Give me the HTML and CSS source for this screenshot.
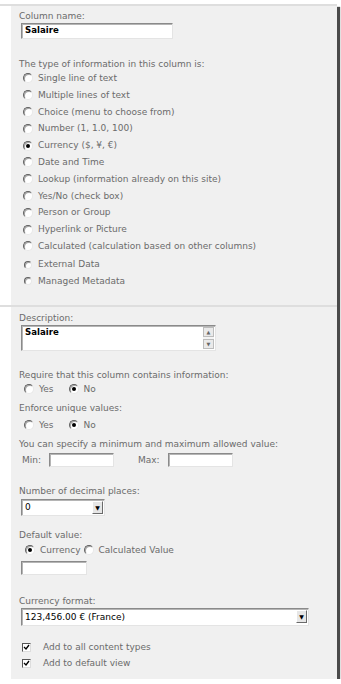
FILE: index.html
```html
<!DOCTYPE html>
<html lang="en">
<head>
    <meta charset="UTF-8">
    <title>Column settings</title>
    <link rel="stylesheet" href="styles.css">
</head>
<body>
<div class="sheet">
    <div class="row first">
        <div class="gutter"></div>
        <div class="panel">
            <div class="label">Column name:</div>
            <div class="box name"><b>Salaire</b></div>

            <div class="label type-head">The type of information in this column is:</div>
            <div class="choices">
                <div class="opt"><span class="radio"></span>Single line of text</div>
                <div class="opt"><span class="radio"></span>Multiple lines of text</div>
                <div class="opt"><span class="radio"></span>Choice (menu to choose from)</div>
                <div class="opt"><span class="radio"></span>Number (1, 1.0, 100)</div>
                <div class="opt"><span class="radio on"></span>Currency ($, ¥, €)</div>
                <div class="opt"><span class="radio"></span>Date and Time</div>
                <div class="opt"><span class="radio"></span>Lookup (information already on this site)</div>
                <div class="opt"><span class="radio"></span>Yes/No (check box)</div>
                <div class="opt"><span class="radio"></span>Person or Group</div>
                <div class="opt"><span class="radio"></span>Hyperlink or Picture</div>
                <div class="opt"><span class="radio"></span>Calculated (calculation based on other columns)</div>
                <div class="opt ext"><span class="radio small"></span>External Data</div>
                <div class="opt"><span class="radio small"></span>Managed Metadata</div>
            </div>
        </div>
    </div>

    <div class="row second">
        <div class="gutter"></div>
        <div class="panel">
            <div class="label">Description:</div>
            <div class="box memo">
                <b>Salaire</b>
                <div class="scroll">
                    <span class="arrow up">&#9650;</span>
                    <span class="arrow down">&#9660;</span>
                </div>
            </div>

            <div class="label require">Require that this column contains information:</div>
            <div class="pair">
                <span class="radio"></span><span class="yes">Yes</span>
                <span class="radio on"></span><span>No</span>
            </div>

            <div class="label enforce">Enforce unique values:</div>
            <div class="pair unique">
                <span class="radio"></span><span class="yes">Yes</span>
                <span class="radio on"></span><span>No</span>
            </div>

            <div class="label minmax-head">You can specify a minimum and maximum allowed value:</div>
            <div class="minmax">
                <span class="mm-label">Min:</span><span class="box mm"></span>
                <span class="mm-label max">Max:</span><span class="box mm"></span>
            </div>

            <div class="label decimals-head">Number of decimal places:</div>
            <div class="box select decimals">0<span class="drop">&#9660;</span></div>

            <div class="label default-head">Default value:</div>
            <div class="pair defaults">
                <span class="radio on"></span><span class="cur">Currency</span>
                <span class="radio"></span><span>Calculated Value</span>
            </div>
            <div class="box dflt"></div>

            <div class="label format-head">Currency format:</div>
            <div class="box select format">123,456.00 € (France)<span class="drop">&#9660;</span></div>

            <div class="checks">
                <div class="chk-row"><span class="chk"><svg viewBox="0 0 7 7" width="7" height="7"><path d="M1 3 L3 5 L6 1" fill="none" stroke="#000" stroke-width="1.3"/></svg></span>Add to all content types</div>
                <div class="chk-row"><span class="chk"><svg viewBox="0 0 7 7" width="7" height="7"><path d="M1 3 L3 5 L6 1" fill="none" stroke="#000" stroke-width="1.3"/></svg></span>Add to default view</div>
            </div>
        </div>
    </div>
</div>
</body>
</html>
```

FILE: styles.css
```css
body {
    margin: 0;
    background: #fff;
    font-family: "DejaVu Sans", Verdana, sans-serif;
    font-size: 9px;
    color: #6b6b6b;
}

.sheet {
    width: 337px;
    margin-top: 4px;
    border-top: 2px solid #dedede;
    box-shadow: 3px 3px 1px #4a4a4a;
}

.row {
    display: flex;
}

.row.first {
    height: 299px;
    border-bottom: 2px solid #dedede;
}

.row.second {
    height: 372px;
}

.gutter {
    width: 11px;
    background: #fff;
}

.panel {
    flex: 1;
    background: #f0f0f0;
    padding: 4px 0 0 8px;
}

.row.second .panel {
    padding-top: 5px;
}

.label {
    height: 12px;
    line-height: 12px;
    white-space: nowrap;
}

.box {
    background: #fff;
    border: 1px solid;
    border-color: #8a8a8a #e4e4e4 #e4e4e4 #8a8a8a;
    box-shadow: inset 1px 1px 0 #b5b5b5;
    color: #000;
    line-height: 13px;
    padding-left: 3px;
    box-sizing: border-box;
}

.box b {
    font-size: 8.6px;
}

.name {
    width: 152px;
    height: 16px;
    margin: 1px 0 0 2px;
}

.type-head {
    margin-top: 19px;
}

.choices {
    padding-left: 4px;
}

.opt {
    height: 16.8px;
    line-height: 16.8px;
    display: flex;
    align-items: center;
    white-space: nowrap;
}

.opt.ext {
    margin-top: 1.5px;
}

.radio {
    width: 10px;
    height: 10px;
    box-sizing: border-box;
    border-radius: 50%;
    border: 1px solid;
    border-color: #5f5f5f #e8e8e8 #e8e8e8 #5f5f5f;
    background: #fff;
    box-shadow: inset 1px 1px 0 #a5a5a5;
    margin-right: 5px;
    display: inline-flex;
    align-items: center;
    justify-content: center;
    flex-shrink: 0;
}

.radio.small {
    width: 8px;
    height: 8px;
    margin-left: 1px;
    margin-right: 6px;
}

.radio.on::after {
    content: "";
    width: 4px;
    height: 4px;
    border-radius: 50%;
    background: #000;
}

.memo {
    position: relative;
    width: 195px;
    height: 26px;
    margin: 1px 0 0 2px;
}

.scroll {
    position: absolute;
    top: 1px;
    right: 1px;
    bottom: 1px;
    width: 11px;
    background: #f4f4f4;
    display: flex;
    flex-direction: column;
    justify-content: space-between;
}

.arrow {
    height: 10px;
    background: #eaeaea;
    border: 1px solid #bcbcbc;
    box-sizing: border-box;
    font-size: 5px;
    line-height: 8px;
    text-align: center;
    color: #666;
}

.require {
    margin-top: 18px;
}

.pair {
    height: 16px;
    display: flex;
    align-items: center;
    padding-left: 5px;
}

.pair .yes {
    margin-right: 15px;
}

.enforce {
    margin-top: 5px;
}

.unique {
    margin-top: 3px;
}

.minmax-head {
    margin-top: 5px;
}

.minmax {
    display: flex;
    align-items: center;
    margin-top: 3px;
    height: 14px;
    padding-left: 3px;
}

.mm-label {
    width: 27px;
}

.mm-label.max {
    width: 30px;
    margin-left: 24px;
}

.box.mm {
    width: 65px;
    height: 14px;
}

.decimals-head {
    margin-top: 18px;
}

.select {
    position: relative;
    height: 17px;
    margin: 2px 0 0 2px;
    line-height: 15px;
}

.decimals {
    width: 84px;
}

.format {
    width: 288px;
    height: 18px;
    margin-top: 1px;
    line-height: 16px;
}

.drop {
    position: absolute;
    top: 1px;
    right: 1px;
    width: 11px;
    height: 13px;
    background: #e6e6e6;
    border: 1px solid;
    border-color: #fff #6a6a6a #6a6a6a #fff;
    box-sizing: border-box;
    font-size: 6px;
    line-height: 11px;
    text-align: center;
    color: #000;
}

.default-head {
    margin-top: 13px;
}

.defaults {
    margin-top: 1px;
    padding-left: 6px;
}

.defaults .cur {
    margin-right: 3px;
}

.dflt {
    width: 66px;
    height: 14px;
    margin: 3px 0 0 2px;
}

.format-head {
    margin-top: 20px;
}

.checks {
    margin-top: 13px;
    padding-left: 3px;
}

.chk-row {
    height: 16px;
    display: flex;
    align-items: center;
    white-space: nowrap;
}

.chk {
    width: 9px;
    height: 9px;
    box-sizing: border-box;
    border: 1px solid;
    border-color: #555 #ddd #ddd #555;
    background: #fff;
    margin-right: 12px;
    display: inline-flex;
    align-items: center;
    justify-content: center;
}
```
